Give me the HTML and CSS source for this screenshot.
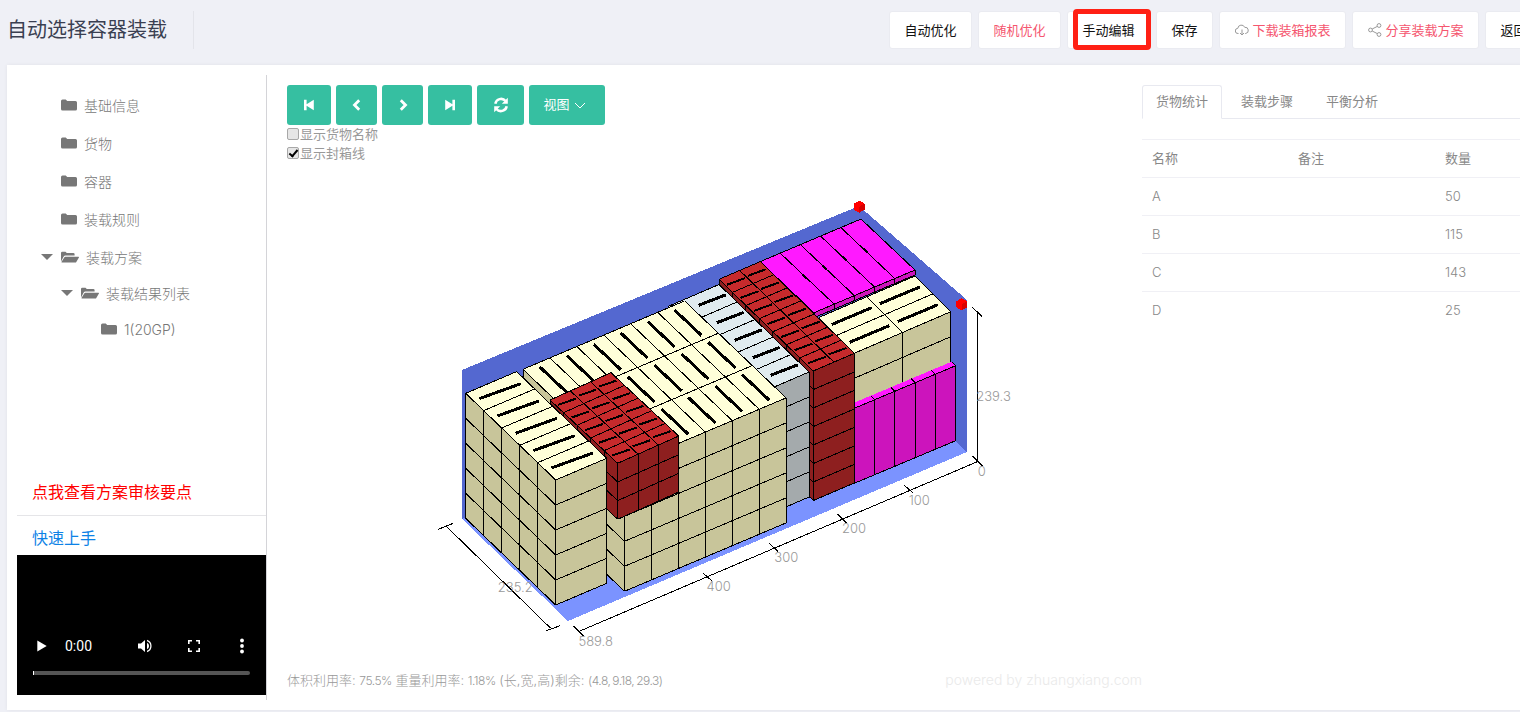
FILE: index.html
```html
<!DOCTYPE html>
<html lang="zh">
<head>
<meta charset="utf-8">
<title>自动选择容器装载</title>
<link rel="stylesheet" href="styles.css">
</head>
<body>
<div class="page">
  <header class="topbar">
    <div class="title-wrap"><h1 class="title">自动选择容器装载</h1></div>
    <div class="actions">
      <button class="btn">自动优化</button>
      <button class="btn btn-pink">随机优化</button>
      <span class="btn-mark"><button class="btn">手动编辑</button></span>
      <button class="btn">保存</button>
      <button class="btn btn-pink"><svg class="ico-cloud" viewBox="0 0 14 12"><path d="M3.5 9.5H3A2.6 2.6 0 0 1 2.8 4.3 3.6 3.6 0 0 1 9.7 3.3 3.1 3.1 0 0 1 10.6 9.5H10" fill="none" stroke="#999" stroke-width="1"/><path d="M7 5.5V11M5 9l2 2 2-2" fill="none" stroke="#999" stroke-width="1"/></svg>下载装箱报表</button>
      <button class="btn btn-pink"><svg class="ico-share" viewBox="0 0 14 14"><circle cx="2.5" cy="7" r="1.9" fill="none" stroke="#999"/><circle cx="11" cy="2.5" r="1.9" fill="none" stroke="#999"/><circle cx="11" cy="11.5" r="1.9" fill="none" stroke="#999"/><path d="M4.2 6 9.3 3.4M4.2 8 9.3 10.6" stroke="#999" fill="none"/></svg>分享装载方案</button>
      <button class="btn">返回</button>
    </div>
  </header>

  <main class="panel">
    <aside class="sidebar">
      <ul class="tree">
        <li class="node lvl0"><span class="caret"></span><svg class="folder" viewBox="0 0 16 12"><path d="M0 2a1.5 1.5 0 0 1 1.5-1.5h3.2L6.2 2h8.3A1.5 1.5 0 0 1 16 3.500v6.500a1.500 1.500 0 0 1-1.500 1.500h-13A1.500 1.500 0 0 1 0 10z"/></svg>基础信息</li>
        <li class="node lvl0"><span class="caret"></span><svg class="folder" viewBox="0 0 16 12"><path d="M0 2a1.5 1.5 0 0 1 1.5-1.5h3.2L6.2 2h8.3A1.5 1.5 0 0 1 16 3.500v6.500a1.500 1.500 0 0 1-1.500 1.500h-13A1.500 1.500 0 0 1 0 10z"/></svg>货物</li>
        <li class="node lvl0"><span class="caret"></span><svg class="folder" viewBox="0 0 16 12"><path d="M0 2a1.5 1.5 0 0 1 1.5-1.5h3.2L6.2 2h8.3A1.5 1.5 0 0 1 16 3.500v6.500a1.500 1.500 0 0 1-1.500 1.500h-13A1.500 1.500 0 0 1 0 10z"/></svg>容器</li>
        <li class="node lvl0"><span class="caret"></span><svg class="folder" viewBox="0 0 16 12"><path d="M0 2a1.5 1.5 0 0 1 1.5-1.5h3.2L6.2 2h8.3A1.5 1.5 0 0 1 16 3.500v6.500a1.500 1.500 0 0 1-1.500 1.500h-13A1.500 1.500 0 0 1 0 10z"/></svg>装载规则</li>
        <li class="node lvl0"><span class="caret open"></span><svg class="folder-open" viewBox="0 0 18 12"><path d="M0 2a1.300 1.300 0 0 1 1.300-1.300h3.200l1.300 1.300h6.500a1.300 1.300 0 0 1 1.300 1.300V4.500H4.500a2 2 0 0 0-1.800 1.100L0 10.500z"/><path d="M4.400 5.700h13a.6.6 0 0 1 .5.9l-2.600 4.500a1 1 0 0 1-.9.500H1a.5.5 0 0 1-.4-.8l2.800-4.600a1.200 1.200 0 0 1 1-.5z"/></svg>装载方案</li>
        <li class="node lvl1 sub"><span class="caret open"></span><svg class="folder-open" viewBox="0 0 18 12"><path d="M0 2a1.300 1.300 0 0 1 1.300-1.300h3.200l1.300 1.300h6.500a1.300 1.300 0 0 1 1.300 1.300V4.500H4.500a2 2 0 0 0-1.800 1.100L0 10.500z"/><path d="M4.400 5.700h13a.6.6 0 0 1 .5.9l-2.600 4.500a1 1 0 0 1-.9.500H1a.5.5 0 0 1-.4-.8l2.800-4.600a1.200 1.200 0 0 1 1-.5z"/></svg>装载结果列表</li>
        <li class="node lvl2 sub"><span class="caret"></span><svg class="folder" viewBox="0 0 16 12"><path d="M0 2a1.5 1.5 0 0 1 1.5-1.5h3.2L6.2 2h8.3A1.5 1.5 0 0 1 16 3.500v6.500a1.500 1.500 0 0 1-1.500 1.500h-13A1.500 1.500 0 0 1 0 10z"/></svg>1(20GP)</li>
      </ul>
      <div class="side-links">
        <a class="link-red">点我查看方案审核要点</a>
        <a class="link-blue">快速上手</a>
        <div class="video">
          <div class="video-row">
            <svg class="v-play" viewBox="0 0 20 16"><path d="M4.300 2.500 13.700 8 4.300 13.500z" fill="#fff"/></svg>
            <span class="v-time">0:00</span>
            <svg class="v-vol" viewBox="0 0 16 14"><path d="M0 4.500h3L7 1v12L3 9.500H0z" fill="#fff"/><path d="M9 3.800a3.500 3.500 0 0 1 0 6.400zM9 .8a6.500 6.500 0 0 1 0 12.400v-1.500a5 5 0 0 0 0-9.400z" fill="#fff"/></svg>
            <svg class="v-full" viewBox="0 0 12 12"><path d="M.8 4V.8H4M8 .8h3.200V4M11.200 8v3.200H8M4 11.200H.8V8" fill="none" stroke="#fff" stroke-width="1.600"/></svg>
            <svg class="v-more" viewBox="0 0 8 16"><circle cx="4" cy="2.500" r="1.900" fill="#fff"/><circle cx="4" cy="8" r="1.900" fill="#fff"/><circle cx="4" cy="13.500" r="1.900" fill="#fff"/></svg>
          </div>
          <div class="v-bar"><span class="v-bar-head"></span></div>
        </div>
      </div>
    </aside>

    <section class="center">
      <div class="toolbar">
        <button class="tool w44"><svg viewBox="0 0 12 12"><path d="M1 .8h2.600v4.400L10.800.8v10.400L3.600 6.800v4.400H1z" fill="#fff"/></svg></button>
        <button class="tool w41"><svg viewBox="0 0 12 12"><path d="M8.200 1.300 3.500 6l4.700 4.700" fill="none" stroke="#fff" stroke-width="2.800"/></svg></button>
        <button class="tool w41"><svg viewBox="0 0 12 12"><path d="M3.800 1.300 8.500 6l-4.700 4.700" fill="none" stroke="#fff" stroke-width="2.800"/></svg></button>
        <button class="tool w44"><svg viewBox="0 0 12 12"><path d="M11 .8H8.400v4.400L1.200.8v10.400l7.200-4.400v4.400H11z" fill="#fff"/></svg></button>
        <button class="tool w47"><svg class="sync" viewBox="0 0 16 16"><path d="M2.300 6.800A5.900 5.900 0 0 1 12.600 4" fill="none" stroke="#fff" stroke-width="2.500"/><path d="M14.800.8v6h-6z" fill="#fff"/><path d="M13.700 9.200A5.900 5.900 0 0 1 3.400 12" fill="none" stroke="#fff" stroke-width="2.500"/><path d="M1.200 15.200v-6h6z" fill="#fff"/></svg></button>
        <button class="tool w76"><span class="tool-label">视图</span><svg class="chev" viewBox="0 0 12 7"><path d="M1 1l5 5 5-5" fill="none" stroke="#fff" stroke-width="1"/></svg></button>
      </div>
      <label class="check"><input type="checkbox">显示货物名称</label>
      <label class="check"><input type="checkbox" checked>显示封箱线</label>

      <svg class="scene" viewBox="267 163 875 504">
        <g id="cargo" class="solid"></g>
        <g class="axes">
          <path d="M977.300 311.700V461.700M972.300 307.300 982.300 316.700M972.300 456 982.300 466"/>
          <path d="M977.300 461.700 578.300 631.700M904 485 913.300 493.300M837.300 514 846.700 523.300M769.300 543.300 778.300 551.700M702.700 572.700 711.700 580.700M573.300 626 583.300 636"/>
          <path d="M446 526 550.700 628.300M438.300 529.300 453.300 523.300M545.700 631 560 625.700"/>
        </g>
        <g class="axis-label">
          <text x="993.500" y="401">239.3</text>
          <text x="981.700" y="476">0</text>
          <text x="919.300" y="505">100</text>
          <text x="854" y="533">200</text>
          <text x="786.300" y="562">300</text>
          <text x="718.700" y="591">400</text>
          <text x="595.700" y="646">589.8</text>
          <text x="515.300" y="592">235.2</text>
        </g>
      </svg>

      <div class="status">
        <span>体积利用率: <span class="num">75.5%</span> 重量利用率: <span class="num">1.18%</span> (长,宽,高)剩余: <span class="num">(4.8, 9.18, 29.3)</span></span>
        <span class="watermark">powered by zhuangxiang.com</span>
      </div>
    </section>

    <section class="stats">
      <ul class="tabs">
        <li class="tab active">货物统计</li>
        <li class="tab">装载步骤</li>
        <li class="tab">平衡分析</li>
      </ul>
      <table class="table">
        <thead><tr><th>名称</th><th>备注</th><th>数量</th></tr></thead>
        <tbody>
          <tr><td>A</td><td></td><td>50</td></tr>
          <tr><td>B</td><td></td><td>115</td></tr>
          <tr><td>C</td><td></td><td>143</td></tr>
          <tr><td>D</td><td></td><td>25</td></tr>
        </tbody>
      </table>
    </section>
  </main>
</div>
<script src="scene.js"></script>
</body>
</html>
```
FILE: styles.css
```css
* { box-sizing: border-box; }
html, body { margin: 0; height: 100%; overflow: hidden; }
body {
  background: #eff0f6;
  color: #777;
  font-family: Inter, "Noto Sans CJK SC", sans-serif;
  font-weight: 300;
  font-size: 13px;
}
.page { width: 1520px; height: 712px; overflow: hidden; }

/* Top bar */
.topbar { display: flex; align-items: flex-start; height: 65px; padding-top: 11px; white-space: nowrap; }
.title-wrap { flex: 0 0 889px; padding-left: 7px; }
.title {
  display: inline-block;
  width: 187px;
  height: 38px;
  margin: 0;
  border-right: 1px solid #e3e4ea;
  color: #3a3f51;
  font-size: 20px;
  font-weight: 400;
  line-height: 39px;
}
.actions { display: flex; gap: 6px; }
.btn {
  height: 38px;
  padding: 0 14.5px 2px;
  border: 1px solid #eaebf1;
  border-radius: 3px;
  background: #fff;
  color: #111;
  font: inherit;
  font-weight: 400;
  white-space: nowrap;
}
.btn-pink { color: #f5566f; }
.ico-cloud { width: 14px; height: 12px; margin-right: 4px; vertical-align: -1px; }
.ico-share { width: 14px; height: 14px; margin-right: 4px; vertical-align: -2px; }
.btn-mark { position: relative; display: block; }
.btn-mark::after {
  content: "";
  position: absolute;
  top: -2px;
  left: 6px;
  box-sizing: border-box;
  width: 78px;
  height: 41px;
  border: 5px solid #ff2014;
  border-radius: 4px;
}

/* Main panel */
.panel {
  display: flex;
  width: 1530px;
  height: 645px;
  margin-left: 7px;
  background: #fff;
  box-shadow: 0 0 4px rgba(0, 0, 0, .06);
}

/* Sidebar */
.sidebar {
  display: flex;
  flex: 0 0 260px;
  flex-direction: column;
  height: 625px;
  margin-top: 10px;
  padding-left: 10px;
  border-right: 1px solid #d4d4d8;
}
.tree { margin: 11px 0 0; padding: 0; list-style: none; }
.node { display: flex; align-items: center; height: 38px; font-size: 14px; color: #777; }
.node.sub { height: 36px; }
.lvl0 { padding-left: 24px; }
.lvl1 { margin-top: -1px; padding-left: 44px; }
.lvl2 { padding-left: 64px; }
.caret { flex: 0 0 20px; }
.caret.open::before {
  content: "";
  display: block;
  width: 0;
  height: 0;
  border-style: solid;
  border-width: 6px 6px 0;
  border-color: #777 transparent transparent;
}
.folder { width: 16px; height: 12px; margin-right: 7px; fill: #777; }
.folder-open { width: 18px; height: 12px; margin-right: 7px; fill: #777; }

.side-links { margin-top: auto; padding-bottom: 5px; }
.link-red {
  display: block;
  height: 47px;
  padding-left: 15px;
  border-bottom: 1px solid #e5e5e8;
  color: #f00;
  font-size: 16px;
  font-weight: 400;
  line-height: 46px;
}
.link-blue {
  display: block;
  height: 39px;
  padding: 5px 0 0 15px;
  color: #0d82e6;
  font-size: 16px;
  font-weight: 400;
  line-height: 34px;
}

/* Video player */
.video {
  display: flex;
  flex-direction: column;
  justify-content: flex-end;
  height: 140px;
  padding: 0 16px 20px;
  background: #000;
}
.video-row { display: flex; align-items: center; height: 24px; margin-bottom: 13px; }
.v-play { width: 20px; height: 16px; }
.v-time { margin-left: 12px; color: #fff; font-family: Roboto, sans-serif; font-size: 14px; font-weight: 400; width: 27px; white-space: nowrap; }
.v-vol { width: 16px; height: 14px; margin-left: 46px; }
.v-full { width: 12px; height: 12px; margin-left: 34px; }
.v-more { width: 8px; height: 16px; margin-left: 38px; }
.v-bar { height: 4px; border-radius: 2px; background: #555; }
.v-bar-head { display: block; width: 1px; height: 4px; background: #fff; }

/* Center */
.center { display: flex; flex: 0 0 875px; flex-direction: column; padding-top: 20px; }
.toolbar { display: flex; gap: 5px; padding-left: 20px; }
.tool {
  display: flex;
  align-items: center;
  justify-content: center;
  height: 40px;
  padding: 0;
  border: 0;
  border-radius: 3px;
  background: #36bfa1;
  color: #fff;
  font: inherit;
  font-weight: 400;
}
.tool svg { width: 12px; height: 12px; }
.tool .sync { width: 16px; height: 16px; }
.tool .chev { width: 12px; height: 7px; margin-left: 4px; }
.tool-label { padding-bottom: 3px; }
.w41 { width: 41px; }
.w44 { width: 44px; }
.w47 { width: 47px; }
.w76 { width: 76px; padding-right: 5px; }
.check { display: flex; align-items: center; height: 19px; padding: 0 0 2px 20px; color: #999; font-size: 13px; font-weight: 400; }
.check input {
  position: relative;
  width: 12px;
  height: 12px;
  margin: 0 1px 0 0;
  border: 1px solid #a8a8a8;
  border-radius: 2px;
  background: #e6e6e6;
  appearance: none;
}
.check input:checked::after {
  content: "";
  position: absolute;
  top: 0;
  left: 3px;
  width: 3px;
  height: 7px;
  border: solid #000;
  border-width: 0 2px 2px 0;
  transform: rotate(40deg);
}
.scene { display: block; width: 875px; height: 504px; flex: none; }
.solid { shape-rendering: crispEdges; }
.axes path { fill: none; stroke: #000; stroke-width: 1; shape-rendering: crispEdges; }
.axis-label text { fill: #999; font-size: 13px; text-anchor: middle; }
.status {
  display: flex;
  justify-content: space-between;
  align-items: center;
  height: 26px;
  padding: 0 0 2px 20px;
  color: #999;
  font-size: 13px;
  white-space: nowrap;
}
.num { font-size: 12px; letter-spacing: -.5px; word-spacing: -1px; }
.watermark { color: #eaeaea; font-size: 14px; }

/* Stats */
.stats { flex: 0 0 388px; padding-top: 20px; }
.tabs { display: flex; height: 34px; margin: 0; padding: 0; border-bottom: 1px solid #e8e9f0; list-style: none; }
.tab { height: 34px; padding: 0 14px 0 19px; color: #888; font-weight: 400; line-height: 32px; white-space: nowrap; }
.tab.active {
  padding: 0 13px;
  border: 1px solid #e8e9f0;
  border-bottom-color: #fff;
  border-radius: 3px 3px 0 0;
  background: #fff;
  line-height: 31px;
}
.table { width: 378px; margin-top: 20px; border-collapse: collapse; table-layout: fixed; color: #888; }
.table th, .table td { height: 38px; padding: 0 0 2px 10px; border-top: 1px solid #f0f0f5; font-weight: 300; text-align: left; }
.table th { font-weight: 400; }
.table th:nth-child(1) { width: 146px; }
.table th:nth-child(2) { width: 147px; }
```
FILE: scene.js
```js
(function () {
  var NS = 'http://www.w3.org/2000/svg';
  var root = document.getElementById('cargo');

  var C = {
    wall: '#5468d0', floor: '#7b93ff',
    cream: '#ffffd9', tan: '#c8c59a',
    mist: '#e0ebef', grey: '#a4aaac',
    red: '#c62a2c', darkred: '#8e1f1f',
    pink: '#ff19ff', darkpink: '#cc14bc'
  };

  function el(name, attrs) {
    var e = document.createElementNS(NS, name);
    for (var k in attrs) e.setAttribute(k, attrs[k]);
    root.appendChild(e);
    return e;
  }
  function poly(pts, fill) {
    el('polygon', { points: pts.map(function (p) { return p[0] + ',' + p[1]; }).join(' '), fill: fill });
  }
  function line(a, b, w) {
    el('line', { x1: a[0], y1: a[1], x2: b[0], y2: b[1], stroke: '#000', 'stroke-width': w || 1 });
  }
  function at(o, u, v, s, t) {
    return [o[0] + u[0] * s + v[0] * t, o[1] + u[1] * s + v[1] * t];
  }
  /* A parallelogram from corner o and edges u, v, cut into nu x nv cells. */
  function face(o, u, v, nu, nv, fill) {
    poly([at(o, u, v, 0, 0), at(o, u, v, 1, 0), at(o, u, v, 1, 1), at(o, u, v, 0, 1)], fill);
    for (var i = 0; i <= nu; i++) line(at(o, u, v, i / nu, 0), at(o, u, v, i / nu, 1));
    for (var j = 0; j <= nv; j++) line(at(o, u, v, 0, j / nv), at(o, u, v, 1, j / nv));
  }
  /* Sealing tape drawn in the middle of a cell. */
  function tape(c, half, w) {
    line([c[0] - half[0], c[1] - half[1]], [c[0] + half[0], c[1] + half[1]], w);
  }
  function tapes(o, u, v, nu, nv, half, shift, w) {
    for (var i = 0; i < nu; i++)
      for (var j = 0; j < nv; j++)
        tape(at(o, u, v, (i + (shift || .5)) / nu, (j + .5) / nv), half, w || 3);
  }

  /* Container shell */
  poly([[462, 370], [859, 206], [967, 300], [967, 452], [861, 351], [462, 519]], C.wall);
  poly([[967, 452], [568, 621], [462, 519], [861, 351]], C.floor);

  /* Flat magenta layer at the back */
  var mo = [760, 261.7], mu = [101, -42.7], md = [54, 51];
  face(mo, mu, md, 5, 1, C.pink);
  face(at(mo, mu, md, 0, 1), mu, [0, 5], 5, 1, C.darkpink);
  for (var m = 1; m < 5; m++) {
    var mc = at(mo, mu, md, m / 5, .45);
    line([mc[0] - 2, mc[1] - 2], [mc[0] + 2, mc[1] + 2], 2);
  }

  /* Cream boxes at the right */
  var ro = [854.3, 353.3], ru = [96.4, -41.6], rd = [-35.7, -35.7];
  face(ro, ru, rd, 2, 2, C.cream);
  tapes(ro, ru, rd, 2, 2, [20, -8.4]);
  face(ro, ru, [0, 55], 2, 1, C.tan);
  line(at(ro, ru, [0, 25], 0, 1), at(ro, ru, [0, 25], 1, 1));

  /* Magenta row below them */
  poly([[854.3, 408.3], [955.7, 365.7], [951.7, 361.7], [850.3, 404.3]], C.pink);
  face([854.3, 408.3], [101.4, -42.6], [0, 75], 5, 1, C.darkpink);
  for (var s = 1; s < 6; s++) {
    var sa = at([854.3, 408.3], [101.4, -42.6], [0, 0], s / 5, 0);
    line(sa, [sa[0] - 4, sa[1] - 4]);
  }

  /* Left side of the tall red tower */
  var to = [719, 279.3], tu = [41.3, -17.7], td = [94.3, 91.7], tv = [0, 129.5];
  face(to, td, tv, 7, 7, C.darkred);

  /* Grey boxes */
  var go = [668, 306.5], gu = [51, -22], gd = [90, 87.5];
  face(go, gu, gd, 1, 5, C.mist);
  tapes(go, gu, gd, 1, 5, [13.5, -5.2], .69);
  face(at(go, gu, gd, 1, 1), [-51, 22], [0, 125], 1, 5, C.grey);

  /* Tower top and front */
  face(to, tu, td, 2, 7, C.red);
  tapes(to, tu, td, 2, 7, [9, -3.3], .5, 2);
  face(at(to, tu, td, 0, 1), tu, tv, 1, 7, C.darkred);

  /* Main block of cream boxes */
  var bo = [523, 369.3], bu = [161.6, -68.4], bd = [101.5, 97], bv = [0, 125];
  face(bo, bd, bv, 3, 5, C.tan);
  face(bo, bu, bd, 6, 3, C.cream);
  tapes(bo, bu, bd, 6, 3, [13.5, 12.7]);
  face(at(bo, bu, bd, 0, 1), bu, bv, 6, 5, C.tan);

  /* Red boxes on top of it */
  var co = [550, 400], cu = [61, -27.3], cd = [67.7, 63.3], cv = [0, 56];
  face(co, cd, cv, 5, 3, C.darkred);
  face(co, cu, cd, 3, 5, C.red);
  tapes(co, cu, cd, 3, 5, [8.7, -3], .5, 2);
  face(at(co, cu, cd, 0, 1), cu, cv, 3, 3, C.darkred);

  /* Front-left stack */
  var ao = [465.7, 393.3], au = [51, -21.7], ad = [90, 86.7], av = [0, 125];
  face(ao, au, ad, 1, 5, C.cream);
  tapes(ao, au, ad, 1, 5, [20.7, -7.5]);
  face(ao, ad, av, 5, 5, C.tan);
  face(at(ao, au, ad, 0, 1), au, av, 1, 5, C.tan);

  /* Red corner markers */
  [[859.3, 206.7], [961.7, 304.3]].forEach(function (p) {
    var x = p[0], y = p[1];
    poly([[x - 5.5, y - 3], [x, y - 6], [x + 5.5, y - 3], [x + 5.5, y + 3], [x, y + 6], [x - 5.5, y + 3]], '#f00');
    poly([[x, y], [x + 5.5, y - 3], [x + 5.5, y + 3], [x, y + 6]], '#d80000');
  });
})();
```
